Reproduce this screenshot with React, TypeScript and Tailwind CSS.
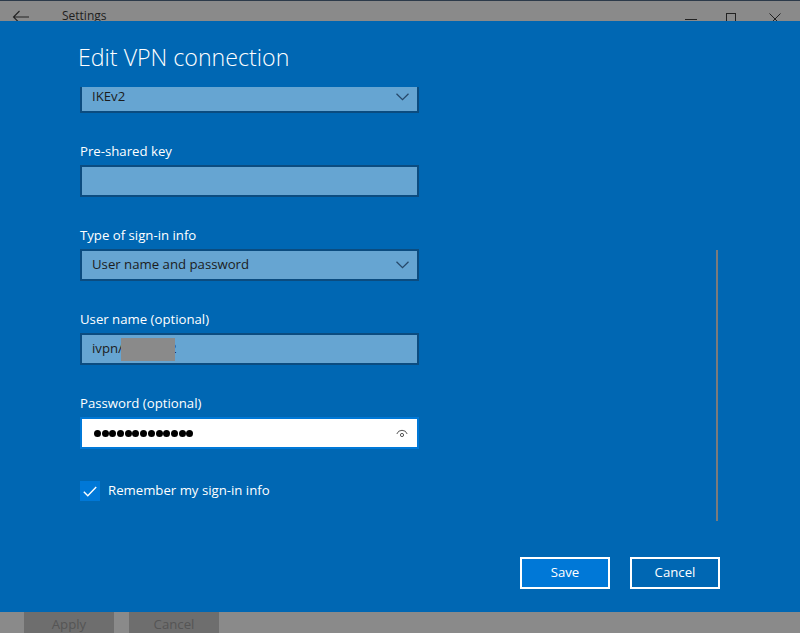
import React from 'react'

const font = { fontFamily: '"Segoe UI", "Open Sans", "Noto Sans", sans-serif' }

function Chevron() {
  return (
    <svg width="13" height="8" viewBox="0 0 13 8" className="shrink-0">
      <path d="M0.5 0.8 L6.5 6.6 L12.5 0.8" fill="none" stroke="#27496a" strokeWidth="1.3" />
    </svg>
  )
}

function Label({ children }: { children: React.ReactNode }) {
  return <div className="h-5 leading-5 text-[13.2px] text-white mb-1">{children}</div>
}

function Select({ value }: { value: string }) {
  return (
    <div className="h-8 w-[339px] border-2 border-[#0b4c80] bg-[#66a5d2] flex items-center justify-between pl-[10px] pr-[8px] text-[13.2px] text-[#1c1c1c]">
      <span>{value}</span>
      <Chevron />
    </div>
  )
}

export default function App() {
  return (
    <div className="w-[800px] h-[633px] flex flex-col overflow-hidden bg-[#8a8a8a]" style={font}>
      {/* dimmed title bar */}
      <div className="h-[21px] shrink-0 border-t border-[#2c3a4a] flex items-start overflow-hidden text-[#1e1e1e]">
        <svg width="18" height="14" viewBox="0 0 18 14" className="ml-[12px] mt-[9px]">
          <path d="M17 7 H1.5 M7.5 1 L1.5 7 L7.5 13" fill="none" stroke="#222" strokeWidth="1.1" />
        </svg>
        <span className="ml-[32px] mt-[7px] text-[12px] leading-4">Settings</span>
        <div className="ml-auto flex items-start">
          <div className="w-[12px] h-px bg-[#222] mt-[18px] mr-[29px]" />
          <div className="w-[10px] h-[10px] border border-[#222] mt-[12px] mr-[33px]" />
          <svg width="12" height="12" viewBox="0 0 12 12" className="mt-[12px] mr-[19px]">
            <path d="M0.5 0.5 L11.5 11.5 M11.5 0.5 L0.5 11.5" fill="none" stroke="#222" strokeWidth="1" />
          </svg>
        </div>
      </div>

      {/* dialog */}
      <div className="h-[591px] shrink-0 bg-[#0067b3] flex flex-col">
        <h1 className="mt-[21px] ml-[78px] h-[30px] leading-[30px] text-[23.2px] font-light text-white">
          Edit VPN connection
        </h1>
        <div className="relative mt-[15px] h-[450px] overflow-hidden">
          <div className="ml-[80px] mt-[-6px] flex flex-col">
            <Select value="IKEv2" />

            <div className="mt-[28px]">
              <Label>Pre-shared key</Label>
              <div className="h-8 w-[339px] border-2 border-[#0b4c80] bg-[#66a5d2]" />
            </div>

            <div className="mt-[28px]">
              <Label>Type of sign-in info</Label>
              <Select value="User name and password" />
            </div>

            <div className="mt-[28px]">
              <Label>User name (optional)</Label>
              <div className="h-8 w-[339px] border-2 border-[#0b4c80] bg-[#66a5d2] flex items-center pl-[10px] text-[13.2px] text-[#1c1c1c]">
                <span>ivpn/</span>
                <span className="relative z-10 inline-block w-[54px] h-[23px] bg-[#8a8a8a] ml-[-2px]" />
                <span className="ml-[-6px]">2</span>
              </div>
            </div>

            <div className="mt-[28px]">
              <Label>Password (optional)</Label>
              <div className="h-8 w-[339px] border-2 border-[#0078d7] bg-white flex items-center justify-between pl-[12px] pr-[9px]">
                <div className="flex gap-[0.7px]">
                  {Array.from({ length: 13 }).map((_, i) => (
                    <span key={i} className="w-[7px] h-[7px] rounded-full bg-black" />
                  ))}
                </div>
                <svg width="12" height="9" viewBox="0 0 12 9">
                  <path d="M0.8 5 A5.5 5.5 0 0 1 11.2 5" fill="none" stroke="#555" strokeWidth="1" />
                  <circle cx="6" cy="6" r="1.6" fill="none" stroke="#555" strokeWidth="1" />
                </svg>
              </div>
            </div>

            <div className="mt-[32px] flex items-center">
              <div className="w-5 h-5 bg-[#0078d7] flex items-center justify-center">
                <svg width="14" height="11" viewBox="0 0 14 11">
                  <path d="M0.8 5.8 L4.8 9.8 L13.2 1" fill="none" stroke="white" strokeWidth="1.4" />
                </svg>
              </div>
              <span className="ml-[8px] text-[13.2px] text-white">Remember my sign-in info</span>
            </div>
          </div>

          <div className="absolute left-[716px] top-[163px] w-[2px] h-[271px] bg-[#7b7b7b]" />
        </div>

        <div className="mt-[20px] flex gap-[20px] ml-[520px]">
          <button className="w-[90px] h-8 border-2 border-white bg-[#0078d7] text-[13.2px] text-white">Save</button>
          <button className="w-[90px] h-8 border-2 border-white text-[13.2px] text-white">Cancel</button>
        </div>
      </div>

      {/* dimmed footer */}
      <div className="h-[21px] shrink-0 flex items-start overflow-hidden">
        <div className="ml-[24px] w-[90px] h-8 bg-[#6e6e6e] text-[#555] text-[13.2px] text-center pt-[3px]">Apply</div>
        <div className="ml-[15px] w-[90px] h-8 bg-[#6e6e6e] text-[#555] text-[13.2px] text-center pt-[3px]">Cancel</div>
      </div>
    </div>
  )
}
